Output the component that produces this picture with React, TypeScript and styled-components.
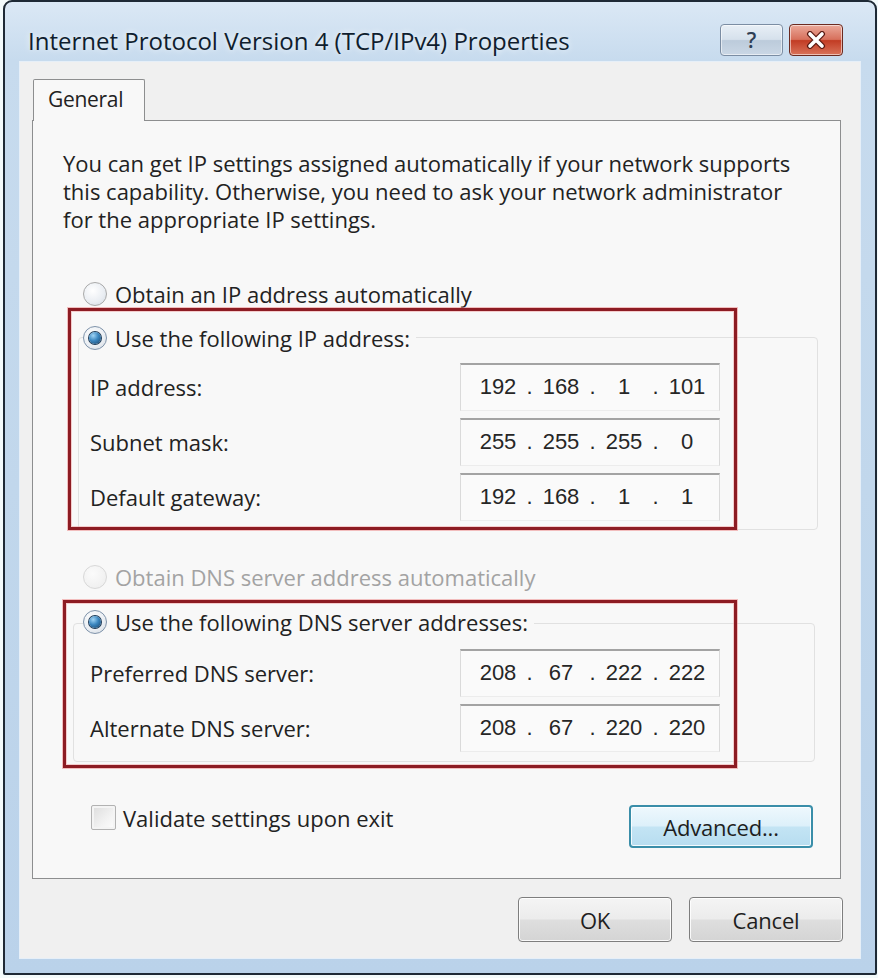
import React from "react";
import styled, { createGlobalStyle } from "styled-components";

const GlobalStyle = createGlobalStyle`
  html, body { margin: 0; padding: 0; }
  body {
    background: #eef8fa;
    font-family: "Open Sans", "Noto Sans", sans-serif;
    -webkit-font-smoothing: antialiased;
  }
`;

const UI_FONT = `"Open Sans", "Noto Sans", sans-serif`;
const PANEL_BG = "#f8f8f8";

const Page = styled.div`
  width: 878px;
  height: 978px;
  box-sizing: border-box;
  padding: 0 1px 0 3px;
  background: #f3fafb;
`;

const Window = styled.div`
  box-sizing: border-box;
  width: 874px;
  height: 975px;
  border: 2px solid #1e2935;
  border-radius: 9px 9px 2px 2px;
  background: linear-gradient(
    180deg,
    #dbe8f5 0%,
    #c7dbee 6%,
    #c1d7ec 50%,
    #bad2ea 100%
  );
  display: flex;
  flex-direction: column;
`;

const TitleBar = styled.div`
  box-sizing: border-box;
  height: 60px;
  padding: 22px 32px 6px 23px;
  display: flex;
  align-items: center;
  gap: 6px;
`;

const Title = styled.div`
  flex: 1;
  font-family: ${UI_FONT};
  font-size: 24px;
  color: #0f1d2e;
  letter-spacing: 0px;
  text-shadow: 0 0 6px rgba(255, 255, 255, 0.9);
  white-space: nowrap;
`;

const CaptionButton = styled.div<{ $variant: "help" | "close" }>`
  box-sizing: border-box;
  height: 32px;
  width: ${(p) => (p.$variant === "help" ? 63 : 54)}px;
  border-radius: 4px;
  display: flex;
  align-items: center;
  justify-content: center;
  font-family: ${UI_FONT};
  font-weight: 600;
  font-size: 21px;
  color: #2f3f55;
  border: 1px solid ${(p) => (p.$variant === "help" ? "#7b8da3" : "#6b2a20")};
  background: ${(p) =>
    p.$variant === "help"
      ? "linear-gradient(180deg, #e8eff6 0%, #d6e1ec 48%, #bccbdb 52%, #cad7e5 100%)"
      : "linear-gradient(180deg, #eba99a 0%, #d7705c 48%, #c23c24 52%, #d9735a 100%)"};
  box-shadow: inset 0 0 0 1px rgba(255, 255, 255, 0.55);
`;

const Client = styled.div`
  flex: 1;
  margin: 0 15px 15px 15px;
  box-sizing: border-box;
  background: #f0f0f0;
  box-shadow: 0 0 0 1px #e6eff8;
  padding: 17px 17px 16px 12px;
  display: flex;
  flex-direction: column;
`;

const TabStrip = styled.div`
  display: flex;
  padding-left: 1px;
`;

const Tab = styled.div`
  box-sizing: border-box;
  width: 112px;
  height: 42px;
  margin-bottom: -1px;
  position: relative;
  z-index: 1;
  border: 1px solid #8d8e8f;
  border-bottom: none;
  border-radius: 2px 2px 0 0;
  background: ${PANEL_BG};
  font-family: ${UI_FONT};
  font-size: 21px;
  letter-spacing: -0.3px;
  color: #222;
  padding: 5px 0 0 14px;
`;

const Panel = styled.div`
  flex: 1;
  margin-right: 2px;
  box-sizing: border-box;
  border: 1px solid #8d8e8f;
  background: ${PANEL_BG};
  padding: 0 27px 0 30px;
  display: flex;
  flex-direction: column;
  font-family: ${UI_FONT};
  font-size: 22px;
  color: #222;
`;

const Intro = styled.p`
  margin: 28px 0 0 0;
  line-height: 28px;
  white-space: nowrap;
`;

const RadioRow = styled.label<{ $disabled?: boolean; $indent?: number; $top?: number }>`
  display: flex;
  align-items: center;
  gap: 8px;
  height: 28px;
  width: fit-content;
  margin-left: ${(p) => p.$indent ?? 0}px;
  margin-top: ${(p) => p.$top ?? 0}px;
  padding-right: 6px;
  background: ${PANEL_BG};
  position: relative;
  color: ${(p) => (p.$disabled ? "#a3a3a3" : "#222")};
  white-space: nowrap;
`;

const RadioDot = styled.span<{ $checked?: boolean; $disabled?: boolean }>`
  box-sizing: border-box;
  width: 24px;
  height: 24px;
  border-radius: 50%;
  flex: none;
  position: relative;
  border: 1px solid ${(p) => (p.$disabled ? "#d8d8d8" : p.$checked ? "#7f93aa" : "#a9a9a9")};
  background: ${(p) =>
    p.$disabled
      ? "radial-gradient(circle at 40% 35%, #fbfbfb, #ececec)"
      : "radial-gradient(circle at 40% 35%, #ffffff 0%, #e9edf2 60%, #cfd6de 100%)"};
  &::after {
    content: "";
    display: ${(p) => (p.$checked ? "block" : "none")};
    position: absolute;
    left: 5px;
    top: 5px;
    width: 12px;
    height: 12px;
    border-radius: 50%;
    background: radial-gradient(circle at 35% 30%, #9fd4f5 0%, #3a86bf 45%, #163f66 100%);
    box-shadow: 0 0 0 1px #1d3a56;
  }
`;

const GroupSection = styled.div<{
  $indent: number;
  $frameTop: number;
  $frameBottom: number;
  $frameRight: number;
  $top: number;
}>`
  position: relative;
  display: flex;
  align-self: flex-start;
  margin-left: ${(p) => p.$indent}px;
  margin-top: ${(p) => p.$top}px;
  padding-right: 81px;
  &::before {
    content: "";
    position: absolute;
    left: 10px;
    right: ${(p) => p.$frameRight}px;
    top: ${(p) => p.$frameTop}px;
    bottom: ${(p) => p.$frameBottom}px;
    border: 1px solid #e1e1e1;
    border-radius: 4px;
  }
`;

const RedBox = styled.div<{ $width: number; $pad: string }>`
  position: relative;
  z-index: 1;
  box-sizing: border-box;
  width: ${(p) => p.$width}px;
  border: 3px solid #8d1c23;
  box-shadow: 0 0 0 1px rgba(236, 140, 140, 0.55), inset 0 0 0 1px rgba(240, 160, 160, 0.5);
  padding: ${(p) => p.$pad};
  display: flex;
  flex-direction: column;
`;

const Rows = styled.div<{ $gap: number }>`
  margin-top: ${(p) => p.$gap}px;
  padding-left: 7px;
  display: flex;
  flex-direction: column;
`;

const FieldRow = styled.div`
  display: grid;
  grid-template-columns: 370px 260px;
  align-items: center;
  height: 55px;
  white-space: nowrap;
`;

const IpBox = styled.div`
  box-sizing: border-box;
  height: 48px;
  display: flex;
  align-items: center;
  padding-left: 11px;
  border-top: 2px solid #a3a3a3;
  border-left: 1px solid #dadada;
  border-right: 1px solid #dadada;
  border-bottom: 1px solid #ececec;
  background: #fafafa;
  font-family: "Liberation Sans", Arial, sans-serif;
  font-size: 22px;
  color: #262626;
`;

const Octet = styled.span`
  width: 52px;
  text-align: center;
`;

const Dot = styled.span`
  width: 11px;
  text-align: center;
`;

const BottomRow = styled.div`
  display: flex;
  justify-content: space-between;
  align-items: flex-start;
  margin-top: 37px;
  margin-left: 28px;
`;

const CheckRow = styled.label`
  display: flex;
  align-items: center;
  gap: 7px;
  height: 25px;
  white-space: nowrap;
`;

const CheckBox = styled.span`
  box-sizing: border-box;
  width: 25px;
  height: 25px;
  border: 1px solid #b2b2b2;
  border-radius: 2px;
  background: linear-gradient(135deg, #dcdcdc 0%, #f2f2f2 60%, #fdfdfd 100%);
  box-shadow: inset 0 0 0 2px #f4f4f4;
`;

const PushButton = styled.div<{ $width: number; $height: number; $focused?: boolean }>`
  box-sizing: border-box;
  width: ${(p) => p.$width}px;
  height: ${(p) => p.$height}px;
  display: flex;
  align-items: center;
  justify-content: center;
  border-radius: 4px;
  font-family: ${UI_FONT};
  font-size: 22px;
  letter-spacing: -0.2px;
  color: #1e1e1e;
  border: ${(p) => (p.$focused ? "2px solid #3a8ea9" : "1px solid #7e7e7e")};
  background: ${(p) =>
    p.$focused
      ? "linear-gradient(180deg, #eef8fd 0%, #ddf0fa 48%, #c3e4f4 52%, #b7ddf0 100%)"
      : "linear-gradient(180deg, #f4f4f4 0%, #ececec 48%, #dedede 52%, #d4d4d4 100%)"};
  box-shadow: inset 0 0 0 1px rgba(255, 255, 255, 0.85);
`;

const ButtonRow = styled.div`
  display: flex;
  justify-content: flex-end;
  gap: 17px;
  margin-top: 18px;
`;

type Ip = [string, string, string, string];

const IpField: React.FC<{ value: Ip }> = ({ value }) => (
  <IpBox>
    <Octet>{value[0]}</Octet>
    <Dot>.</Dot>
    <Octet>{value[1]}</Octet>
    <Dot>.</Dot>
    <Octet>{value[2]}</Octet>
    <Dot>.</Dot>
    <Octet>{value[3]}</Octet>
  </IpBox>
);

const CloseGlyph = () => (
  <svg width="22" height="18" viewBox="0 0 22 18">
    <path d="M5 3 L17 15 M17 3 L5 15" stroke="#5a1a12" strokeWidth="6" strokeLinecap="round" />
    <path d="M5 3 L17 15 M17 3 L5 15" stroke="#ffffff" strokeWidth="3.6" strokeLinecap="round" />
  </svg>
);

const ipRows: { label: string; value: Ip }[] = [
  { label: "IP address:", value: ["192", "168", "1", "101"] },
  { label: "Subnet mask:", value: ["255", "255", "255", "0"] },
  { label: "Default gateway:", value: ["192", "168", "1", "1"] },
];

const dnsRows: { label: string; value: Ip }[] = [
  { label: "Preferred DNS server:", value: ["208", "67", "222", "222"] },
  { label: "Alternate DNS server:", value: ["208", "67", "220", "220"] },
];

export default function App() {
  return (
    <Page>
      <GlobalStyle />
      <Window>
        <TitleBar>
          <Title>Internet Protocol Version 4 (TCP/IPv4) Properties</Title>
          <CaptionButton $variant="help">?</CaptionButton>
          <CaptionButton $variant="close">
            <CloseGlyph />
          </CaptionButton>
        </TitleBar>
        <Client>
          <TabStrip>
            <Tab>General</Tab>
          </TabStrip>
          <Panel>
            <Intro>
              You can get IP settings assigned automatically if your network supports
              <br />
              this capability. Otherwise, you need to ask your network administrator
              <br />
              for the appropriate IP settings.
            </Intro>

            <RadioRow $indent={20} $top={47}>
              <RadioDot />
              Obtain an IP address automatically
            </RadioRow>

            <GroupSection $indent={5} $top={0} $frameTop={29} $frameBottom={0} $frameRight={0}>
              <RedBox $width={669} $pad="13px 14px 3px 12px">
                <RadioRow>
                  <RadioDot $checked />
                  Use the following IP address:
                </RadioRow>
                <Rows $gap={7}>
                  {ipRows.map((r) => (
                    <FieldRow key={r.label}>
                      <span>{r.label}</span>
                      <IpField value={r.value} />
                    </FieldRow>
                  ))}
                </Rows>
              </RedBox>
            </GroupSection>

            <RadioRow $indent={20} $top={33} $disabled>
              <RadioDot $disabled />
              Obtain DNS server address automatically
            </RadioRow>

            <GroupSection $indent={0} $top={9} $frameTop={23} $frameBottom={6} $frameRight={3}>
              <RedBox $width={674} $pad="5px 14px 10px 17px">
                <RadioRow>
                  <RadioDot $checked />
                  Use the following DNS server addresses:
                </RadioRow>
                <Rows $gap={9}>
                  {dnsRows.map((r) => (
                    <FieldRow key={r.label}>
                      <span>{r.label}</span>
                      <IpField value={r.value} />
                    </FieldRow>
                  ))}
                </Rows>
              </RedBox>
            </GroupSection>

            <BottomRow>
              <CheckRow>
                <CheckBox />
                Validate settings upon exit
              </CheckRow>
              <PushButton $width={184} $height={43} $focused>
                Advanced...
              </PushButton>
            </BottomRow>
          </Panel>
          <ButtonRow>
            <PushButton $width={154} $height={45}>OK</PushButton>
            <PushButton $width={154} $height={45}>Cancel</PushButton>
          </ButtonRow>
        </Client>
      </Window>
    </Page>
  );
}
